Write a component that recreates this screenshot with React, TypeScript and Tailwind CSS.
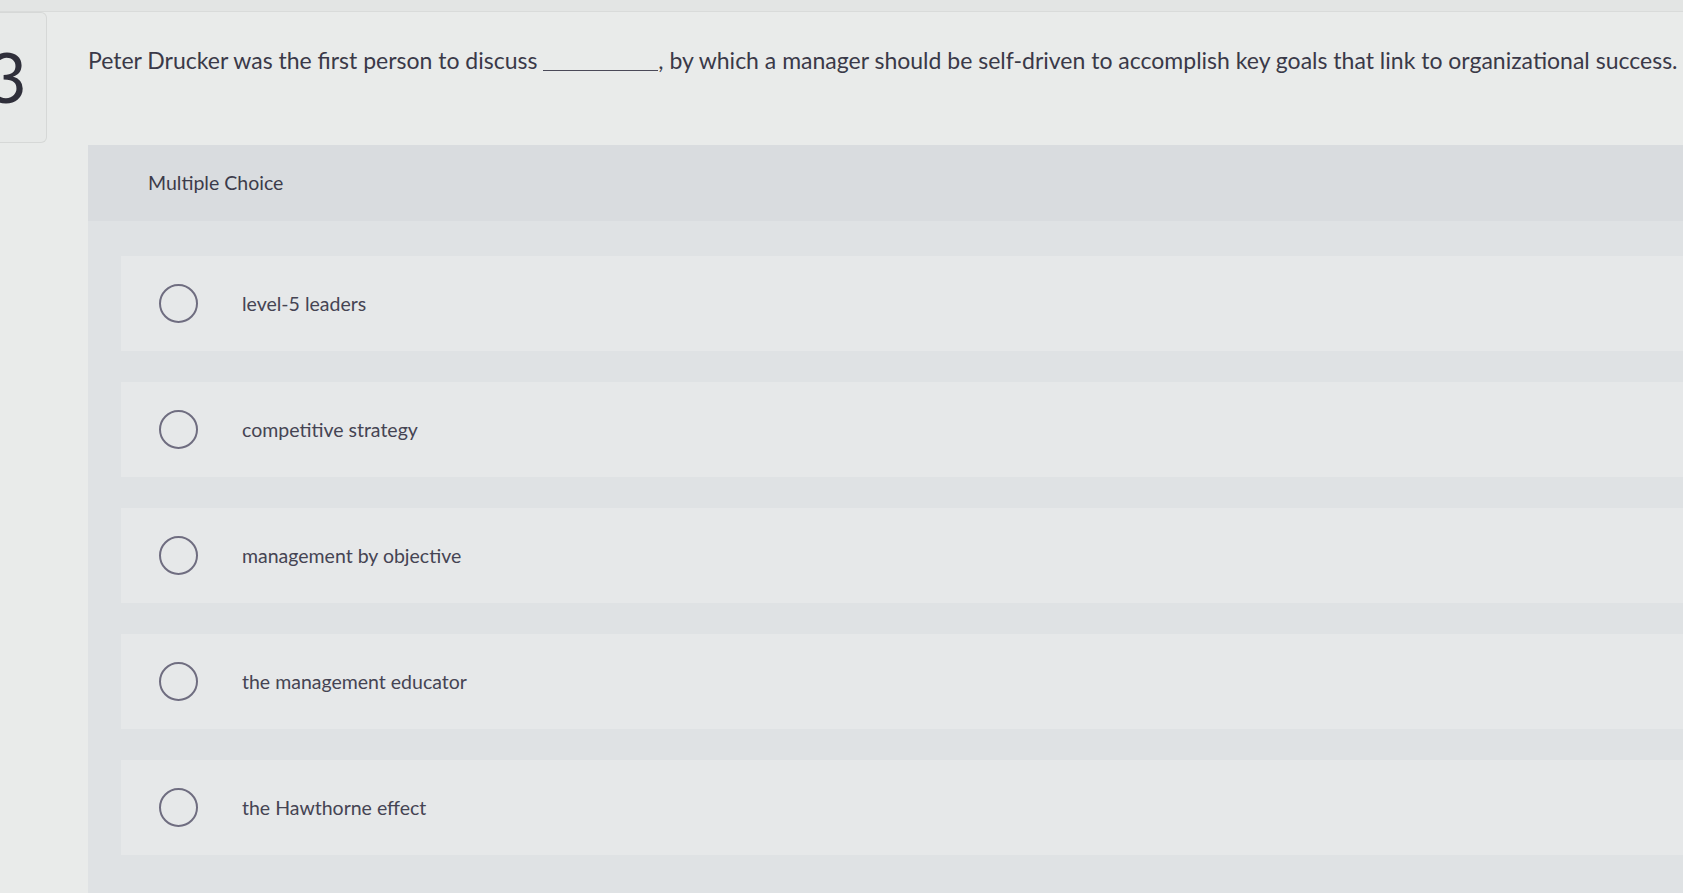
import React from "react";

const options = [
  "level-5 leaders",
  "competitive strategy",
  "management by objective",
  "the management educator",
  "the Hawthorne effect",
];

function Radio() {
  return (
    <div className="w-[39px] h-[39px] shrink-0 rounded-full border-2 border-[#6f6d80]" />
  );
}

export default function App() {
  return (
    <div
      className="relative w-[1683px] h-[893px] overflow-hidden bg-[#e9ebea] text-[#3f3e4c]"
      style={{ fontFamily: "Lato, 'Liberation Sans', sans-serif" }}
    >
      <div className="h-[12px] bg-[#e3e5e4] border-b border-[#d9dbda]" />
      <div className="flex">
        {/* number box */}
        <div className="w-[47px] h-[131px] shrink-0 rounded-br-[6px] rounded-tr-[6px] border border-l-0 border-[#d6d8d7] bg-[#e7e9e8] overflow-hidden flex items-start">
          <span className="ml-[-14px] mt-[28px] text-[70px] leading-[70px] font-normal text-[#2f2f3a]">
            3
          </span>
        </div>
        <div className="flex-1 pl-[41px] pt-[33px]">
          <p className="whitespace-nowrap text-[23px] leading-[30px] text-[#3a3948]">
            Peter Drucker was the first person to discuss{" "}
            <span className="inline-block w-[115px] border-b border-[#4a4958] translate-y-[2px]" />
            , by which a manager should be self-driven to accomplish key goals that link to organizational success.
          </p>
        </div>
      </div>

      {/* panel */}
      <div className="ml-[88px] mt-[2px] bg-[#e0e3e5]">
        <div className="h-[76px] bg-[#d9dcdf] flex items-center pl-[60px]">
          <span className="text-[19.5px] text-[#3c3b4a]">Multiple Choice</span>
        </div>
        <div className="pt-[35px] pl-[33px] flex flex-col gap-[31px] bg-[#dfe2e4] pb-[40px]">
          {options.map((o) => (
            <div
              key={o}
              className="h-[95px] bg-[#e6e8e9] flex items-center pl-[38px]"
            >
              <Radio />
              <span className="ml-[44px] text-[19.5px] text-[#454453]">{o}</span>
            </div>
          ))}
        </div>
      </div>
    </div>
  );
}
